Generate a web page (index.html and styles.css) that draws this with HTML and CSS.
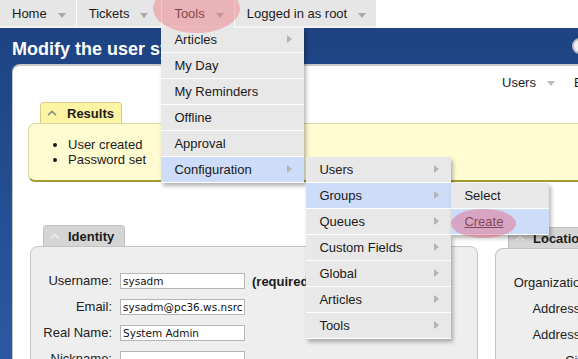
FILE: index.html
```html
<!DOCTYPE html>
<html lang="en">
<head>
    <meta charset="UTF-8">
    <title>Modify the user sysadm</title>
    <link rel="stylesheet" href="styles.css">
</head>
<body>
    <div class="topbar">
        <div class="nav-item">Home <span class="caret"></span></div>
        <div class="nav-item tickets">Tickets <span class="caret"></span></div>
        <div class="nav-item">Tools <span class="caret"></span>
            <span class="mark tools-mark"></span>
            <ul class="menu tools-menu">
                <li class="has-sub">Articles</li>
                <li>My Day</li>
                <li>My Reminders</li>
                <li>Offline</li>
                <li>Approval</li>
                <li class="has-sub active">Configuration
                    <ul class="menu config-menu">
                        <li class="has-sub">Users</li>
                        <li class="has-sub active">Groups
                            <ul class="menu groups-menu">
                                <li>Select</li>
                                <li class="active"><a href="#">Create</a><span class="mark create-mark"></span></li>
                            </ul>
                        </li>
                        <li class="has-sub">Queues</li>
                        <li class="has-sub">Custom Fields</li>
                        <li class="has-sub">Global</li>
                        <li class="has-sub">Articles</li>
                        <li class="has-sub">Tools</li>
                    </ul>
                </li>
            </ul>
        </div>
        <div class="nav-item">Logged in as root <span class="caret"></span></div>
    </div>

    <div class="frame">
        <div class="header">
            <h1>Modify the user sysadm</h1>
            <input class="search" type="text">
        </div>

        <div class="panel">
            <div class="page-menu">
                <span>Users</span><span class="caret light"></span>
                <span>Basics</span>
            </div>

            <div class="results">
                <div class="tab">
                    <svg width="10" height="6" viewBox="0 0 10 6"><polyline points="1,5.2 5,1.4 9,5.2" fill="none" stroke="#8f8f86" stroke-width="1.6"/></svg>
                    Results
                </div>
                <div class="box-body">
                    <ul>
                        <li>User created</li>
                        <li>Password set</li>
                    </ul>
                </div>
            </div>

            <div class="columns">
                <div class="box identity">
                    <div class="tab">
                        <svg width="10" height="6" viewBox="0 0 10 6"><polyline points="1,5.2 5,1.4 9,5.2" fill="none" stroke="#f2f2f2" stroke-width="1.4"/></svg>
                        Identity
                    </div>
                    <div class="box-body">
                        <div class="row"><label>Username:</label><input type="text" value="sysadm"><b>(required)</b></div>
                        <div class="row"><label>Email:</label><input type="text" value="sysadm@pc36.ws.nsrc.org"></div>
                        <div class="row"><label>Real Name:</label><input type="text" value="System Admin"></div>
                        <div class="row"><label>Nickname:</label><input type="text" value=""></div>
                    </div>
                </div>
                <div class="box location">
                    <div class="tab">
                        <svg width="10" height="6" viewBox="0 0 10 6"><polyline points="1,5.2 5,1.4 9,5.2" fill="none" stroke="#f2f2f2" stroke-width="1.4"/></svg>
                        Location
                    </div>
                    <div class="box-body">
                        <div class="row"><label>Organization:</label><input type="text" value=""></div>
                        <div class="row"><label>Address1:</label><input type="text" value=""></div>
                        <div class="row"><label>Address2:</label><input type="text" value=""></div>
                        <div class="row"><label>City:</label><input type="text" value=""></div>
                    </div>
                </div>
            </div>
        </div>
    </div>
</body>
</html>
```

FILE: styles.css
```css
html, body {
    margin: 0;
    height: 100%;
    overflow: hidden;
}
body {
    font-family: "Liberation Sans", Arial, sans-serif;
    font-size: 13px;
    color: #1b1b1b;
    background: #fff;
    display: flex;
    flex-direction: column;
}

/* top navigation */
.topbar {
    display: flex;
    flex: none;
    position: relative;
    z-index: 10;
}
.nav-item {
    position: relative;
    display: flex;
    align-items: center;
    gap: 11px;
    height: 26px;
    padding: 0 10px 0 12px;
    background: #e6e6e6;
    border-right: 1px solid #fff;
    border-bottom: 2px solid #f3f3f3;
    white-space: nowrap;
}
.nav-item.tickets {
    padding-right: 13px;
}
.caret {
    width: 0;
    height: 0;
    border-left: 4.5px solid transparent;
    border-right: 4.5px solid transparent;
    border-top: 5px solid #a9a9a9;
    margin-top: 4px;
}
.caret.light {
    border-top-color: #bcbcbc;
    margin-top: 2px;
    margin-right: 8px;
}

/* dropdown menus */
.menu {
    position: absolute;
    list-style: none;
    margin: 0;
    padding: 0;
    background: #e8e8e8;
    box-shadow: 2px 3px 4px rgba(0, 0, 0, 0.3);
}
.menu li {
    position: relative;
    height: 25px;
    line-height: 25px;
    padding-left: 13px;
    border-bottom: 1px solid #fff;
    color: #1a1a1a;
}
.menu li.active {
    background: #ccdcf9;
}
.menu li.has-sub::after {
    content: "";
    position: absolute;
    right: 12px;
    top: 8px;
    border-top: 4.5px solid transparent;
    border-bottom: 4.5px solid transparent;
    border-left: 5px solid #b3b3b3;
}
.menu a {
    color: #222;
}
.tools-menu {
    left: -1px;
    top: 27px;
    width: 143px;
}
.config-menu {
    left: calc(100% + 2px);
    top: 0;
    width: 145px;
}
.groups-menu {
    left: 100%;
    top: 0;
    width: 98px;
}

/* pink highlight marks */
.mark {
    position: absolute;
    border-radius: 50%;
    pointer-events: none;
    z-index: 20;
}
.tools-mark {
    left: -9px;
    top: -16px;
    width: 87px;
    height: 49px;
    background: rgba(240, 120, 125, 0.45);
}
.create-mark {
    left: 0;
    top: 0;
    width: 65px;
    height: 29px;
    background: rgba(225, 110, 140, 0.5);
}

/* blue frame */
.frame {
    flex: 1;
    display: flex;
    flex-direction: column;
    background: linear-gradient(#1d4382, #2d5ba5);
    padding-left: 12px;
}
.header {
    height: 36px;
    display: flex;
    align-items: center;
    flex: none;
}
.header h1 {
    margin: 6px 0 0 0;
    font-size: 18px;
    line-height: 22px;
    color: #fff;
    white-space: nowrap;
}
.search {
    margin-left: auto;
    margin-right: -94px;
    width: 100px;
    height: 16px;
    box-sizing: border-box;
    border: 2px solid #b9c0cb;
    border-radius: 8px;
    background: #f2f2f2;
}

.panel {
    flex: 1;
    background: #fff;
    border-top: 2px solid #c6c6c6;
    border-left: 1px solid #c6c6c6;
    border-top-left-radius: 8px;
}
.page-menu {
    display: flex;
    align-items: center;
    gap: 11px;
    height: 16px;
    margin: 8px 0 0 489px;
    white-space: nowrap;
}

/* boxes with tabs */
.tab {
    display: flex;
    align-items: center;
    gap: 10px;
    width: fit-content;
    height: 20px;
    border: 1px solid #c2c2c2;
    border-bottom: none;
    border-radius: 4px 4px 0 0;
    font-weight: bold;
    position: relative;
    z-index: 1;
}
.results {
    margin: 12px -12px 0 15px;
}
.results .tab {
    margin-left: 12px;
    padding: 0 7px 0 6px;
    background: #fcf4a2;
    border-color: #d6cd8c;
}
.results .box-body {
    background: #fffcd2;
    border: 1px solid #dcd7a4;
    border-right: none;
    border-bottom: 2px solid #a39b2d;
    border-radius: 7px 0 0 7px;
    padding: 13px 0;
}
.results ul {
    margin: 0;
    padding-left: 39px;
    line-height: 15px;
}

.columns {
    display: grid;
    grid-template-columns: 448px 1fr;
    column-gap: 17px;
    margin: 43px 0 0 17px;
}
.box .tab {
    margin-left: 13px;
    padding: 0 10px 0 6px;
    gap: 8px;
    background: #d5d5d5;
}
.box .box-body {
    background: #eeeeee;
    border: 1px solid #c4c4c4;
    border-right: none;
    border-radius: 8px 0 0 0;
    padding: 26px 0 0 0;
    height: 120px;
}
.identity .box-body {
    border-right: 1px solid #c4c4c4;
    border-radius: 8px 8px 0 0;
}
.location {
    margin-top: 2px;
}

.row {
    display: flex;
    align-items: center;
    gap: 8px;
    height: 16px;
    margin-bottom: 10px;
    white-space: nowrap;
}
.row label {
    width: 81px;
    flex: none;
    text-align: right;
    line-height: 16px;
    color: #222;
}
.location .row label {
    width: 95px;
}
.row input {
    width: 125px;
    height: 16px;
    flex: none;
    box-sizing: border-box;
    border: 1px solid #b5b5b5;
    padding: 0 2px;
    margin: 0;
    background: #fff;
    font-family: "DejaVu Sans", sans-serif;
    font-size: 10.5px;
    color: #111;
}
.row b {
    margin-left: -1px;
}
```
